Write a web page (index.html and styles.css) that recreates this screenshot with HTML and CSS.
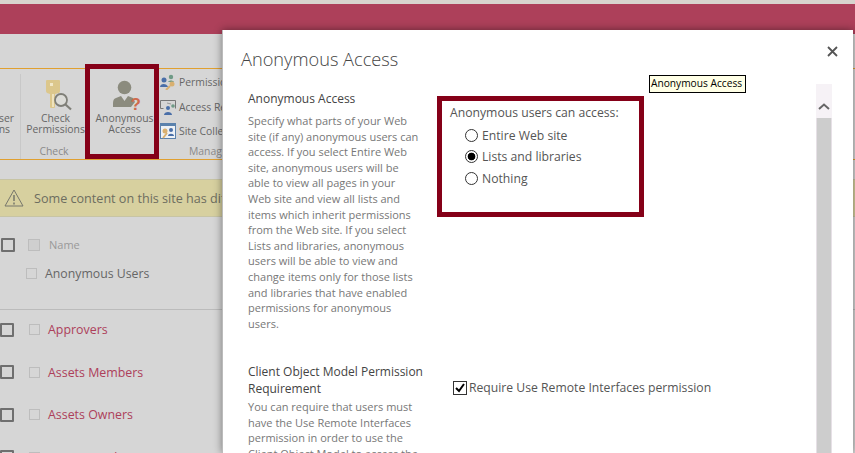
FILE: index.html
```html
<!DOCTYPE html>
<html lang="en">
<head>
<meta charset="utf-8">
<title>Anonymous Access</title>
<link rel="stylesheet" href="styles.css">
</head>
<body>
<div class="page">
  <div class="strip"></div>
  <div class="banner"></div>
  <div class="ribbon">
    <div class="rib-clipped"><span>User</span><span>ons</span></div>
    <div class="rib-group check-group">
      <div class="rib-btn">
        <svg class="ico-key" width="27" height="32" viewBox="0 0 27 32">
          <path d="M1 0h12q1 0 1 1v10q0 1-1 2l-4 1v13q0 1-1 1H5q-1 0-1-1V14l-3-1q-1-1-1-2V1q0-1 1-1z" fill="#dcc78c"/>
          <rect x="4" y="3" width="3" height="3" fill="#f2e8c8"/>
          <rect x="6" y="14" width="2" height="13" fill="#efe3bd"/>
          <circle cx="15" cy="20" r="6" fill="#dcdcd8" stroke="#7f7f78" stroke-width="1.800"/>
          <path d="M19.500 24.500l5.500 5" stroke="#7f7f78" stroke-width="2.200"/>
        </svg>
        <span class="rib-label">Check<br>Permissions</span>
      </div>
      <span class="group-name check-name">Check</span>
    </div>
    <div class="rib-anon">
      <svg width="34" height="34" viewBox="0 0 34 34">
        <circle cx="14.500" cy="9.500" r="6.800" fill="#8b8b7e"/>
        <path d="M3 29c0-6 0-8 3-9l5-2 3.500 5 3.500-5 5 2 2 4-4 5z" fill="#8b8b7e"/>
        <text x="20.500" y="32" class="qmark">?</text>
      </svg>
      <span class="rib-label">Anonymous<br>Access</span>
    </div>
    <div class="rib-group manage-group">
      <div class="rib-item">
        <svg width="16" height="16" viewBox="0 0 16 16"><circle cx="4" cy="6" r="2.500" fill="#4a6fa8"/><path d="M0 13c0-4 7-4 8 0z" fill="#4a6fa8"/><circle cx="11" cy="3" r="2.200" fill="#6f9a86"/><path d="M8 8c1-2 5-2 6 0z" fill="#6f9a86"/><circle cx="12" cy="10" r="2.500" fill="#d9b070"/><path d="M10 12l-4 4" stroke="#d9b070" stroke-width="2"/></svg>
        <span>Permissions</span>
      </div>
      <div class="rib-item">
        <svg width="16" height="16" viewBox="0 0 16 16"><path d="M.5 1.500h15v8M.5 1.500v8h3" fill="none" stroke="#777" stroke-width="1"/><circle cx="8" cy="9" r="2" fill="#4a6fa8"/><path d="M4 16c0-4 8-4 8 0z" fill="#4a6fa8"/><circle cx="13" cy="7" r="1.800" fill="#6f9a86"/><path d="M11 5l-4-1" stroke="#999"/></svg>
        <span>Access Request Settings</span>
      </div>
      <div class="rib-item">
        <svg width="16" height="16" viewBox="0 0 16 16"><rect x=".5" y=".5" width="15" height="15" fill="#eef2f6" stroke="#5b82ad"/><rect x="1" y="1" width="14" height="2" fill="#5b82ad"/><circle cx="5" cy="8" r="2.500" fill="#d9b070"/><path d="M7 10l-4 5" stroke="#d9b070" stroke-width="2"/><circle cx="11" cy="7" r="2" fill="#4a6fa8"/><path d="M8 13c0-3 6-3 6 0z" fill="#4a6fa8"/></svg>
        <span>Site Collection Administrators</span>
      </div>
      <span class="group-name manage-name">Manage</span>
    </div>
  </div>
  <div class="notice">
    <svg width="20" height="18" viewBox="0 0 20 18"><path d="M10 1L1 17h18z" fill="none" stroke="#77776c" stroke-width="1"/><path d="M10 6v6M10 13.500v2" stroke="#77776c" stroke-width="1.500"/></svg>
    <span>Some content on this site has different permissions from what you see here.</span>
  </div>
  <div class="list">
    <div class="list-head">
      <span class="box big"></span><span class="box head-box"></span><span class="name-col">Name</span>
    </div>
    <div class="list-anon"><span class="box"></span><span>Anonymous Users</span></div>
    <div class="list-row first"><span class="box big"></span><span class="box"></span><a>Approvers</a></div>
    <div class="list-row"><span class="box big"></span><span class="box"></span><a>Assets Members</a></div>
    <div class="list-row"><span class="box big"></span><span class="box"></span><a>Assets Owners</a></div>
    <div class="list-row"><span class="box big"></span><span class="box"></span><a>Assets Readers</a></div>
  </div>
</div>

<div class="modal">
  <div class="modal-head">
    <h1>Anonymous Access</h1>
    <svg class="close" width="11" height="11" viewBox="0 0 11 11"><path d="M1 1l9 9M10 1l-9 9" stroke="#555" stroke-width="1.800"/></svg>
  </div>
  <div class="modal-body">
    <div class="form">
      <div class="sect sect-one">
        <div class="sect-text">
          <h2>Anonymous Access</h2>
          <p>Specify what parts of your Web<br>site (if any) anonymous users can<br>access. If you select Entire Web<br>site, anonymous users will be<br>able to view all pages in your<br>Web site and view all lists and<br>items which inherit permissions<br>from the Web site. If you select<br>Lists and libraries, anonymous<br>users will be able to view and<br>change items only for those lists<br>and libraries that have enabled<br>permissions for anonymous<br>users.</p>
        </div>
        <div class="access-box">
          <div class="access-title">Anonymous users can access:</div>
          <label class="radio"><span class="dot"></span>Entire Web site</label>
          <label class="radio"><span class="dot on"></span>Lists and libraries</label>
          <label class="radio"><span class="dot"></span>Nothing</label>
        </div>
      </div>
      <div class="sect sect-two">
        <div class="sect-text">
          <h2>Client Object Model Permission Requirement</h2>
          <p>You can require that users must<br>have the Use Remote Interfaces<br>permission in order to use the<br>Client Object Model to access the</p>
        </div>
        <label class="check">
          <svg width="14" height="14" viewBox="0 0 14 14"><rect x=".5" y=".5" width="13" height="13" fill="#fff" stroke="#333"/><path d="M3 7l3 3 5-7" fill="none" stroke="#000" stroke-width="2"/></svg>
          Require Use Remote Interfaces permission
        </label>
      </div>
    </div>
    <div class="scrollbar">
      <div class="scroll-up"><svg width="12" height="7" viewBox="0 0 12 7"><path d="M1 6l5-4.500L11 6" fill="none" stroke="#666" stroke-width="2"/></svg></div>
      <div class="scroll-thumb"></div>
    </div>
  </div>
  <div class="tooltip">Anonymous Access</div>
</div>
</body>
</html>
```
FILE: styles.css
```css
html, body { margin: 0; padding: 0; }
body {
  position: relative;
  width: 855px;
  height: 453px;
  overflow: hidden;
  background: #d6d6d6;
  font-family: "Open Sans", "Noto Sans", sans-serif;
  color: #444;
}
.page { width: 855px; }
.strip { height: 4px; background: #d8d4ce; }
.banner { height: 30px; background: #ad405a; }
.ribbon {
  display: flex;
  margin-top: 34px;
  height: 90px;
  border-top: 1px solid #e0a030;
  border-bottom: 1px solid #e0a030;
  font-size: 10.400px;
  line-height: 11px;
  color: #666;
}
.rib-clipped {
  width: 21px;
  height: 85px;
  margin-top: 5px;
  box-sizing: border-box;
  display: flex;
  flex-direction: column;
  align-items: flex-end;
  padding: 39px 6px 0 0;
  border-right: 1px solid #c8c8c8;
  overflow: hidden;
  white-space: nowrap;
}
.rib-clipped span:last-child { margin-right: 4px; }
.rib-group { display: flex; flex-direction: column; }
.check-group { width: 64px; padding-left: 5px; box-sizing: border-box; align-items: center; }
.rib-btn { display: flex; flex-direction: column; align-items: center; padding-top: 11px; height: 77px; box-sizing: border-box; }
.ico-key { margin-left: 7px; margin-bottom: 1px; }
.rib-label { text-align: center; white-space: nowrap; }
.group-name { color: #8a8a8a; }
.check-name { margin-right: 3px; }
.rib-anon {
  width: 74px;
  height: 95px;
  margin-top: -5px;
  box-sizing: border-box;
  border: 5px solid #850018;
  display: flex;
  flex-direction: column;
  align-items: center;
  padding: 9px 0 0 5px;
}
.rib-anon svg { margin-left: 5px; margin-bottom: 1px; }
.qmark { font: bold 17px "Liberation Sans", sans-serif; fill: #cf6a4c; }
.manage-group { padding: 1px 0 0 1px; white-space: nowrap; }
.rib-item { display: flex; align-items: center; gap: 3px; height: 24.500px; }
.rib-item:nth-child(2) { padding-top: 1px; height: 23.500px; }
.manage-name { margin-top: 2px; margin-left: 29px; }
.notice {
  display: flex;
  align-items: center;
  gap: 10px;
  margin-top: 19px;
  height: 36px;
  padding-left: 4px;
  background: #d7d09f;
  border-top: 1px solid #c7c4a4;
  border-bottom: 1px solid #c7c4a4;
  font-size: 12.600px;
  color: #6d6d60;
  white-space: nowrap;
}
.list { margin-top: 20px; white-space: nowrap; }
.box {
  display: block;
  width: 9px;
  height: 9px;
  flex: none;
  border: 1px solid #bdbdbd;
}
.box.big { width: 10px; height: 10px; border: 2px solid #6f6f6f; border-radius: 1px; }
.list-head { display: flex; align-items: center; height: 15px; padding-left: 1px; font-size: 11px; color: #999; }
.list-head .head-box { width: 10px; height: 10px; margin-left: 13px; background: #cfcfcf; }
.name-col { margin-left: 9px; }
.list-anon { display: flex; align-items: center; height: 15px; margin-top: 14px; padding-left: 26px; gap: 8px; font-size: 12.300px; color: #666; }
.list-row { display: flex; align-items: center; height: 15px; margin-top: 27.500px; font-size: 12.400px; }
.list-row.first { border-top: 1px solid #bbb; margin-top: 28px; padding-top: 12px; height: 15px; }
.list-row .box { margin-left: 15px; }
.list-row .box.big { margin-left: 0; }
.list-row a { margin-left: 8px; color: #ad405a; }

.modal {
  position: absolute;
  left: 222px;
  top: 30px;
  width: 631px;
  height: 423px;
  background: #fff;
  display: flex;
  flex-direction: column;
  box-shadow: 0 0 8px rgba(0,0,0,.45);
  border-left: 1px solid #bbb;
  box-sizing: border-box;
}
.modal-head {
  height: 54px;
  flex: none;
  display: flex;
  justify-content: space-between;
  padding: 16px 15px 0 18px;
  box-sizing: border-box;
}
h1 { margin: 0; font-size: 18.200px; line-height: 26px; font-weight: 300; color: #444; }
.modal-body { flex: 1; display: flex; min-height: 0; }
.form { flex: 1; padding-left: 25px; overflow: hidden; }
.sect { display: flex; }
.sect-one { height: 279px; }
.sect-text { width: 178px; flex: none; }
h2 { margin: 6px 0 0; font-size: 12px; line-height: 17px; font-weight: 400; color: #444; }
.sect-text p { margin: 6px 0 0; font-size: 11px; line-height: 15.600px; color: #777; white-space: nowrap; }
.access-box {
  margin: 12px 0 0 11px;
  width: 207px;
  height: 121px;
  box-sizing: border-box;
  border: 5px solid #850018;
  padding: 3px 8px;
  font-size: 12.200px;
  color: #555;
}
.access-title { line-height: 17px; margin-bottom: 3.500px; }
.radio { display: flex; align-items: center; gap: 4px; height: 21.500px; margin-left: 15px; }
.dot {
  display: block;
  width: 11px;
  height: 11px;
  border: 1px solid #333;
  border-radius: 50%;
  background: #fff;
}
.dot.on { background: radial-gradient(circle, #000 0 3.500px, #fff 4.200px); }
.sect-two h2 { margin-top: 0; }
.sect-two .sect-text p { margin-top: 2px; }
.check { display: flex; align-items: center; gap: 2px; height: 17px; margin: 16px 0 0 27px; font-size: 12.200px; color: #555; white-space: nowrap; }
.scrollbar { width: 16px; margin-right: 21px; display: flex; flex-direction: column; flex: none; }
.scroll-up { height: 34px; background: #f6f2f6; display: flex; justify-content: center; padding-top: 19px; box-sizing: border-box; }
.scroll-thumb { flex: 1; background: #cdcdcd; border-left: 1px solid #e6e0e6; border-right: 1px solid #e6e0e6; }
.tooltip {
  position: absolute;
  left: 426px;
  top: 45px;
  width: 97px;
  height: 18px;
  box-sizing: border-box;
  border: 1px solid #000;
  background: #ffffe6;
  color: #000;
  font-size: 10.200px;
  line-height: 15px;
  padding-left: 1px;
  white-space: nowrap;
}
```
